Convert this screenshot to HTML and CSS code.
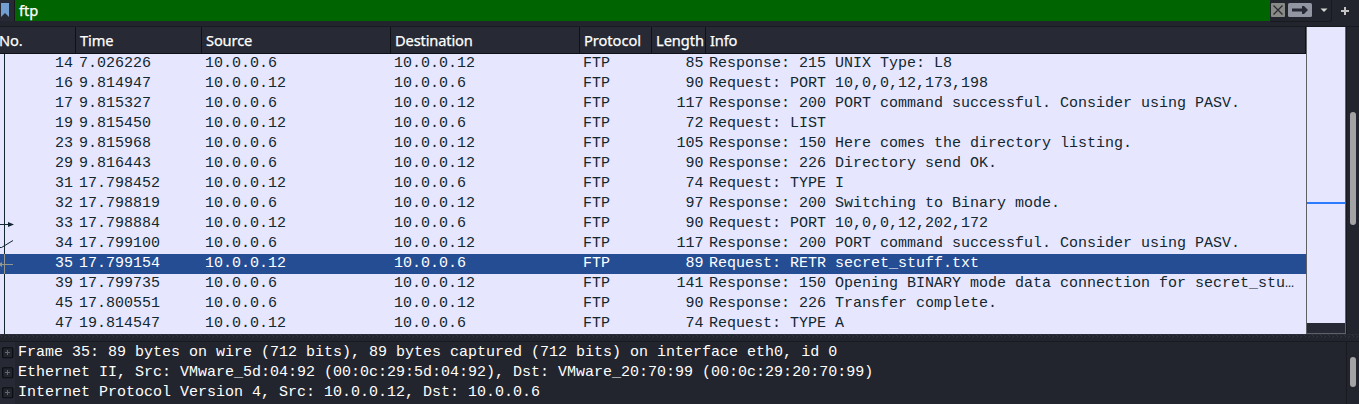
FILE: index.html
```html
<!DOCTYPE html>
<html lang="en">
<head>
<meta charset="utf-8">
<title>Packet capture</title>
<link rel="stylesheet" href="styles.css">
</head>
<body>
<div class="app">
  <div class="filter">
    <div class="bookmark"><svg width="14" height="21" viewBox="0 0 14 21"><path d="M1 3h8v14l-4-4-4 4z" fill="#729fcf"/></svg></div>
    <div class="query">ftp</div>
    <div class="actions">
      <svg width="61" height="21" viewBox="0 0 61 21">
        <rect x="1" y="3" width="14" height="14" rx="1" fill="#888a85"/>
        <path d="M3.5 5.500l9 9M12.500 5.500l-9 9" stroke="#272a34" stroke-width="1.200"/>
        <rect x="18" y="3" width="24" height="14" rx="1.500" fill="#9295a2"/>
        <path d="M22 8.500h10V6h2l4 4-4 4h-2v-2.500H22z" fill="#272a34"/>
        <path d="M50.500 8.500h7l-3.500 3.500z" fill="#d3d7cf"/>
      </svg>
    </div>
    <svg class="plus" width="10" height="10" viewBox="0 0 10 10"><path d="M5 1v8M1 5h8" stroke="#c4c4c5" stroke-width="2"/></svg>
  </div>
  <div class="main">
    <div class="list">
      <div class="row head"><div>No.</div><div>Time</div><div>Source</div><div>Destination</div><div>Protocol</div><div>Length</div><div>Info</div></div>
      <div class="rows">
        <div class="row"><div>14</div><div>7.026226</div><div>10.0.0.6</div><div>10.0.0.12</div><div>FTP</div><div>85</div><div>Response: 215 UNIX Type: L8</div></div>
        <div class="row"><div>16</div><div>9.814947</div><div>10.0.0.12</div><div>10.0.0.6</div><div>FTP</div><div>90</div><div>Request: PORT 10,0,0,12,173,198</div></div>
        <div class="row"><div>17</div><div>9.815327</div><div>10.0.0.6</div><div>10.0.0.12</div><div>FTP</div><div>117</div><div>Response: 200 PORT command successful. Consider using PASV.</div></div>
        <div class="row"><div>19</div><div>9.815450</div><div>10.0.0.12</div><div>10.0.0.6</div><div>FTP</div><div>72</div><div>Request: LIST</div></div>
        <div class="row"><div>23</div><div>9.815968</div><div>10.0.0.6</div><div>10.0.0.12</div><div>FTP</div><div>105</div><div>Response: 150 Here comes the directory listing.</div></div>
        <div class="row"><div>29</div><div>9.816443</div><div>10.0.0.6</div><div>10.0.0.12</div><div>FTP</div><div>90</div><div>Response: 226 Directory send OK.</div></div>
        <div class="row"><div>31</div><div>17.798452</div><div>10.0.0.12</div><div>10.0.0.6</div><div>FTP</div><div>74</div><div>Request: TYPE I</div></div>
        <div class="row"><div>32</div><div>17.798819</div><div>10.0.0.6</div><div>10.0.0.12</div><div>FTP</div><div>97</div><div>Response: 200 Switching to Binary mode.</div></div>
        <div class="row"><div>33</div><div>17.798884</div><div>10.0.0.12</div><div>10.0.0.6</div><div>FTP</div><div>90</div><div>Request: PORT 10,0,0,12,202,172</div></div>
        <div class="row"><div>34</div><div>17.799100</div><div>10.0.0.6</div><div>10.0.0.12</div><div>FTP</div><div>117</div><div>Response: 200 PORT command successful. Consider using PASV.</div></div>
        <div class="row selected"><div>35</div><div>17.799154</div><div>10.0.0.12</div><div>10.0.0.6</div><div>FTP</div><div>89</div><div>Request: RETR secret_stuff.txt</div></div>
        <div class="row"><div>39</div><div>17.799735</div><div>10.0.0.6</div><div>10.0.0.12</div><div>FTP</div><div>141</div><div>Response: 150 Opening BINARY mode data connection for secret_stu…</div></div>
        <div class="row"><div>45</div><div>17.800551</div><div>10.0.0.6</div><div>10.0.0.12</div><div>FTP</div><div>90</div><div>Response: 226 Transfer complete.</div></div>
        <div class="row"><div>47</div><div>19.814547</div><div>10.0.0.12</div><div>10.0.0.6</div><div>FTP</div><div>74</div><div>Request: TYPE A</div></div>
        <svg class="marks" width="16" height="280" viewBox="0 0 16 280">
          <path d="M4.500 0v200M4.500 220v60" stroke="#12272e"/>
          <path d="M0 170.500h9" stroke="#12272e"/><path d="M8 168l6 2.500-6 2.500z" fill="#12272e"/>
          <path d="M0 193.500h1.500L13 186.500" stroke="#12272e" fill="none"/>
          <path d="M4.500 200v20M0 210.500h13" stroke="#93958f"/><path d="M2 208v5l-4-2.500z" fill="#93958f"/>
        </svg>
      </div>
    </div>
    <div class="minimap"><div class="above"></div><div class="current"></div><div class="below"></div></div>
    <div class="gutter"><div class="thumb"></div></div>
  </div>
  <svg class="splitter" width="1359" height="8">
    <defs><pattern id="grip" width="8" height="6" patternUnits="userSpaceOnUse"><path d="M0 1l2 2M4 4l2-2" stroke="#323540" fill="none"/></pattern></defs>
    <rect width="1359" height="1" fill="#2a2c37"/>
    <rect y="1" width="1359" height="5" fill="url(#grip)"/>
  </svg>
  <div class="details">
    <div class="tree">
      <div class="node"><svg class="box" width="12" height="12" viewBox="0 0 12 12"><rect x=".75" y=".75" width="10" height="10" rx="1" fill="#23252e" stroke="#0b0c10" stroke-width="1.200"/><path d="M3 5.500h5M5.500 3v5" stroke="#62656d"/></svg><span>Frame 35: 89 bytes on wire (712 bits), 89 bytes captured (712 bits) on interface eth0, id 0</span></div>
      <div class="node"><svg class="box" width="12" height="12" viewBox="0 0 12 12"><rect x=".75" y=".75" width="10" height="10" rx="1" fill="#23252e" stroke="#0b0c10" stroke-width="1.200"/><path d="M3 5.500h5M5.500 3v5" stroke="#62656d"/></svg><span>Ethernet II, Src: VMware_5d:04:92 (00:0c:29:5d:04:92), Dst: VMware_20:70:99 (00:0c:29:20:70:99)</span></div>
      <div class="node"><svg class="box" width="12" height="12" viewBox="0 0 12 12"><rect x=".75" y=".75" width="10" height="10" rx="1" fill="#23252e" stroke="#0b0c10" stroke-width="1.200"/><path d="M3 5.500h5M5.500 3v5" stroke="#62656d"/></svg><span>Internet Protocol Version 4, Src: 10.0.0.12, Dst: 10.0.0.6</span></div>
    </div>
    <div class="gutter low"><div class="thumb"></div></div>
  </div>
</div>
</body>
</html>
```
FILE: styles.css
```css
* { box-sizing: border-box; }
body { margin: 0; background: #23252e; }
.app { width: 1359px; height: 404px; overflow: hidden; display: flex; flex-direction: column; color: #fff; font: 15px/20px "Liberation Mono", monospace; }
svg { display: block; flex: none; }

.filter { display: flex; height: 22px; margin-bottom: 4px; font: 14.670px/21px "Noto Sans", sans-serif; -webkit-text-stroke: .25px; }
.bookmark { width: 15px; height: 21px; background: #272a34; border-right: 1px solid #17181e; }
.query { width: 1255px; height: 21px; padding-left: 4px; background: #006400; }
.actions { width: 62px; height: 22px; border-right: 1px solid #181a20; border-bottom: 1px solid #181a20; border-radius: 0 0 3px 0; }
.plus { margin: 6px 0 0 8px; }

.main { display: flex; height: 308px; border-top: 1px solid #181a20; }
.list { width: 1306px; }
.row { display: grid; grid-template-columns: 76px 126px 189px 189px 72px 54px 600px; height: 20px; line-height: 20px; white-space: pre; color: #12272e; }
.row > div { padding-left: 3px; }
.row > div:nth-child(1), .row > div:nth-child(6) { text-align: right; padding: 0 3px 0 0; }
.row > div:nth-child(6) { padding-right: 2.500px; }
.head { height: 27px; background: #272a34; color: #fff; border-bottom: 1px solid #101116; font: 14.670px/27px "Noto Sans", sans-serif; letter-spacing: -.15px; -webkit-text-stroke: .25px; }
.row.head > div { padding: 0 0 0 4px; text-align: left; border-right: 1px solid #101116; }
.row.head > div:first-child { padding-left: 0; text-indent: -1px; }
.row.head > div:nth-child(5), .row.head > div:nth-child(6) { letter-spacing: -.05px; }
.rows { position: relative; height: 280px; background: #e6e6ff; }
.row.selected { background: #244d94; color: #fff; }
.marks { position: absolute; left: 0; top: 0; }

.minimap { width: 40px; height: 307px; border: 1px solid #606067; border-top: 0; background: #e6e6ff; display: flex; flex-direction: column; }
.above { height: 175px; }
.current { height: 2px; background: #2c7bff; }
.below { height: 10px; margin-top: auto; background: #272a34; }
.gutter { width: 13px; border-left: 1px solid #181a20; padding: 85px 0 0 3px; }
.thumb { width: 6px; height: 113px; border-radius: 3px; background: #a3a3a5; }

.splitter { border-bottom: 1px solid #181a20; }
.details { display: flex; height: 62px; }
.tree { width: 1346px; background: linear-gradient(to right, #272a34 15px, #23252e 15px); }
.node { display: flex; height: 20px; line-height: 21px; white-space: pre; }
.box { margin: 5px 4px 0 2px; }
.low { padding-top: 15px; }
.low .thumb { height: 30px; }
```
